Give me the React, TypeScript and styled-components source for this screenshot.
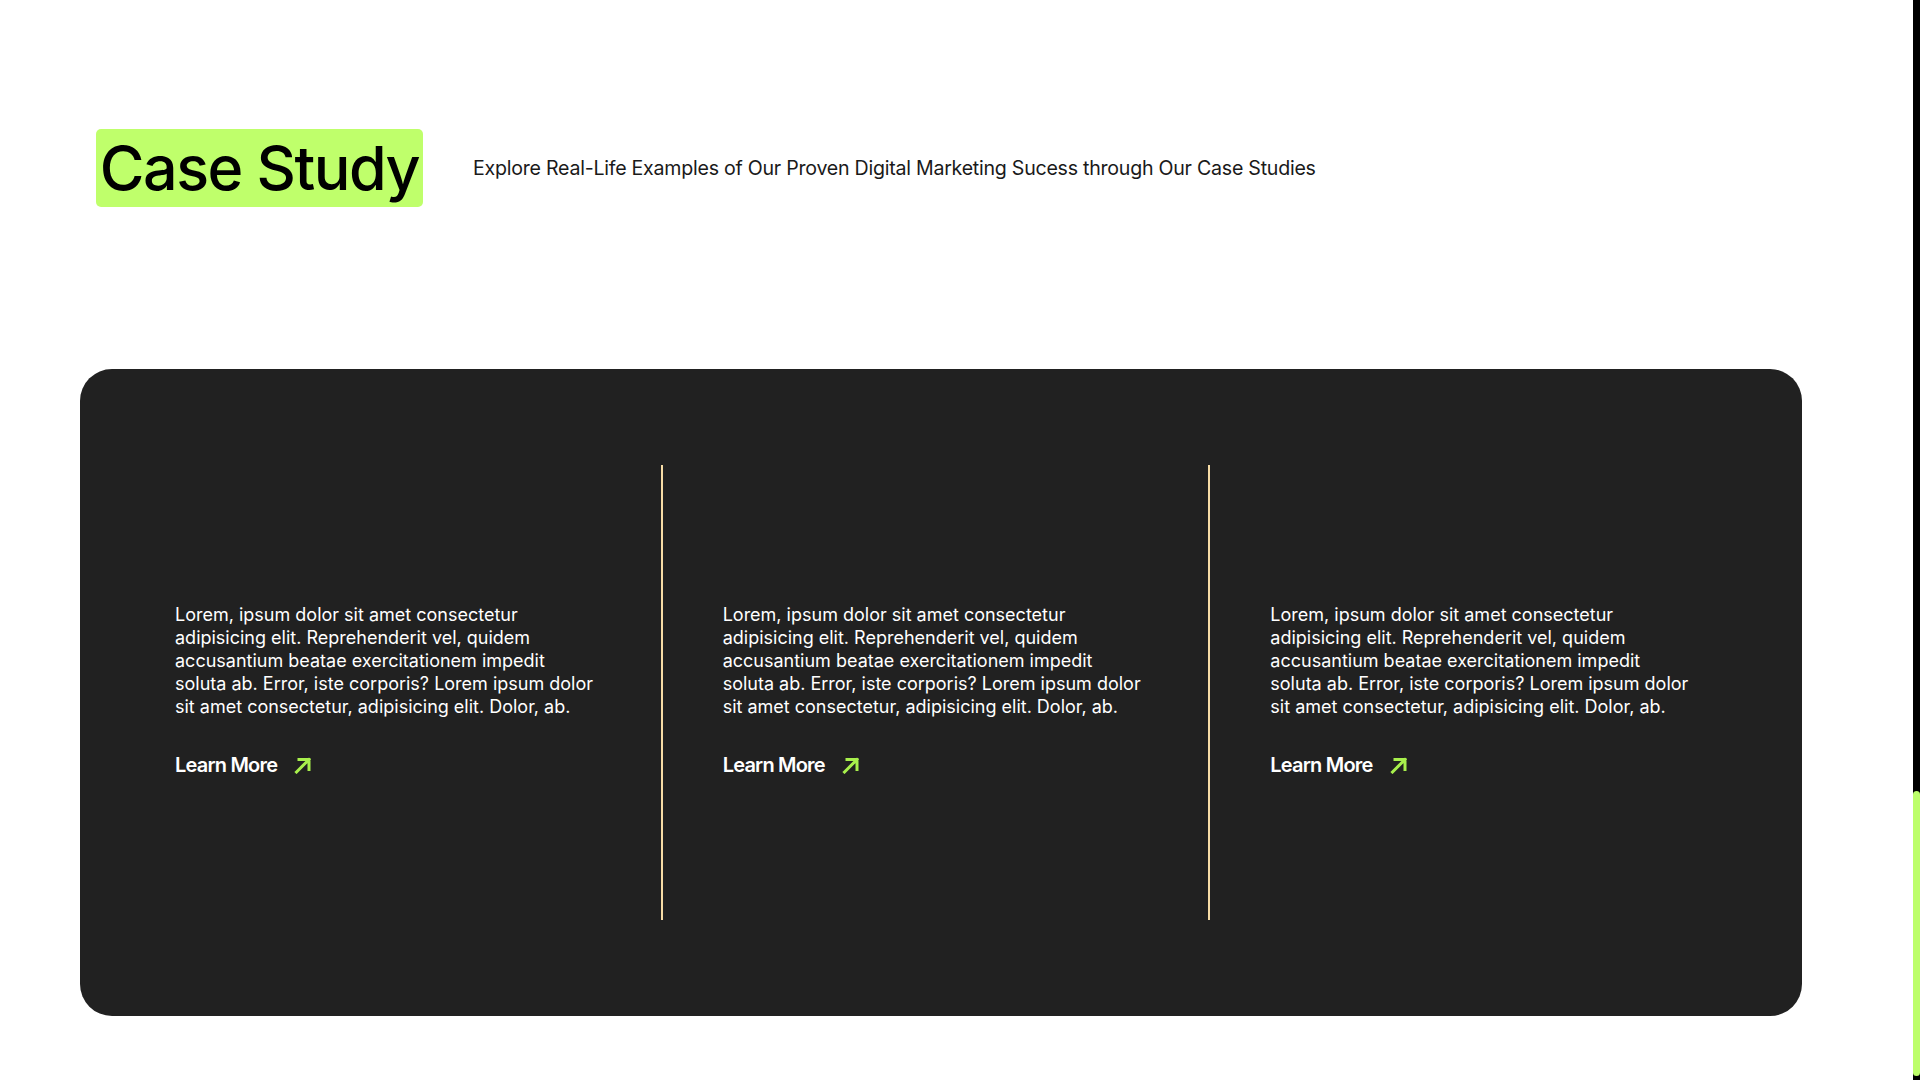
import React from "react";
import styled, { createGlobalStyle } from "styled-components";

const GlobalStyle = createGlobalStyle`
  html, body {
    margin: 0;
    padding: 0;
    background: #ffffff;
    overflow: hidden;
  }
  body {
    font-family: "Inter", "Liberation Sans", sans-serif;
    color: #111111;
  }
  * { box-sizing: border-box; }
`;

const Page = styled.div`
  display: flex;
  height: 1080px;
  width: 1920px;
`;

const Main = styled.main`
  flex: 1;
  padding-top: 129px;
`;

const ScrollTrack = styled.div`
  width: 7px;
  background: #000000;
  display: flex;
  flex-direction: column;
  justify-content: flex-end;
  padding-bottom: 4px;
`;

const ScrollThumb = styled.div`
  height: 285px;
  background: #bdfe6b;
  border-radius: 4px;
`;

const Header = styled.header`
  display: flex;
  align-items: center;
  gap: 50px;
  padding-left: 96px;
`;

const Title = styled.h2`
  margin: 0;
  height: 78px;
  width: 327px;
  display: flex;
  align-items: center;
  justify-content: center;
  background: #bfff6b;
  border-radius: 5px;
  font-size: 61px;
  font-weight: 500;
  letter-spacing: -1.5px;
  color: #000000;
`;

const Subtitle = styled.p`
  margin: 0;
  font-size: 19.6px;
  font-weight: 400;
  letter-spacing: -0.25px;
  color: #1a1a1a;
`;

const Card = styled.section`
  margin-top: 162px;
  margin-left: 80px;
  width: 1722px;
  height: 647px;
  background: #212121;
  border-radius: 32px;
  padding: 96px 46px 96px 33px;
  display: grid;
  grid-template-columns: repeat(3, 1fr);
`;

const Column = styled.div<{ $divider: boolean }>`
  border-left: 2px solid ${(p) => (p.$divider ? "#f7dca6" : "transparent")};
  padding-left: 60px;
  padding-bottom: 5px;
  display: flex;
  flex-direction: column;
  justify-content: center;
`;

const Body = styled.p`
  margin: 0;
  width: 418px;
  font-size: 18px;
  line-height: 23px;
  letter-spacing: 0;
  color: #ffffff;
`;

const LearnMore = styled.a`
  margin-top: 35px;
  display: inline-flex;
  align-items: center;
  gap: 17px;
  font-size: 20px;
  font-weight: 600;
  letter-spacing: -0.8px;
  color: #ffffff;
  text-decoration: none;
  cursor: pointer;
`;

const Arrow = () => (
  <svg width="18" height="17" viewBox="0 0 18 17" fill="none">
    <path
      d="M2.5 15 L15 2.5 M5 2.5 H15 V12.5"
      stroke="#a8f04c"
      strokeWidth="3"
      strokeLinecap="square"
    />
  </svg>
);

const text =
  "Lorem, ipsum dolor sit amet consectetur adipisicing elit. Reprehenderit vel, quidem accusantium beatae exercitationem impedit soluta ab. Error, iste corporis? Lorem ipsum dolor sit amet consectetur, adipisicing elit. Dolor, ab.";

export default function App() {
  return (
    <>
      <GlobalStyle />
      <Page>
        <Main>
          <Header>
            <Title>Case Study</Title>
            <Subtitle>
              Explore Real-Life Examples of Our Proven Digital Marketing Sucess
              through Our Case Studies
            </Subtitle>
          </Header>
          <Card>
            {[0, 1, 2].map((i) => (
              <Column key={i} $divider={i > 0}>
                <Body>{text}</Body>
                <div>
                  <LearnMore>
                    Learn More
                    <Arrow />
                  </LearnMore>
                </div>
              </Column>
            ))}
          </Card>
        </Main>
        <ScrollTrack>
          <ScrollThumb />
        </ScrollTrack>
      </Page>
    </>
  );
}
